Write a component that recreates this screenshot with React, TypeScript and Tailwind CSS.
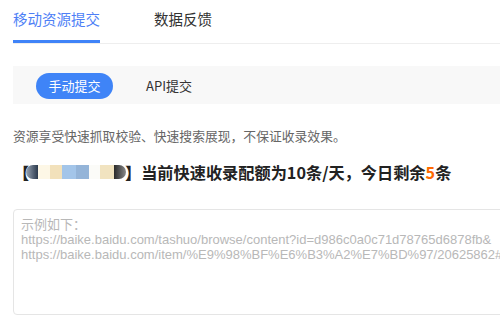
import React from "react";

const font = { fontFamily: '"Noto Sans CJK SC", "Noto Sans", sans-serif' };
const latin = { fontFamily: '"Liberation Sans", "Noto Sans CJK SC", sans-serif' };

export default function App() {
  return (
    <div className="w-[500px] h-[321px] overflow-hidden bg-white" style={font}>
      <div className="ml-[13px] flex border-b border-[#eeeeee] h-[44px]">
        <div className="h-[43px] border-b-[3px] border-[#3f83f8] pt-[9px] text-[14.5px] leading-[20px] text-[#4e7ff6]">
          移动资源提交
        </div>
        <div className="ml-[54px] pt-[9px] text-[14.5px] leading-[20px] text-[#333333]">数据反馈</div>
      </div>

      <div className="ml-[13px] mt-[22px] h-[38px] bg-[#f8f8f8] pl-[23px] pt-[7px] flex items-start">
        <div className="h-[26px] w-[77px] rounded-full bg-[#3f84f7] text-white text-[13px] leading-[26px] text-center">
          手动提交
        </div>
        <div className="ml-[33px] text-[13px] leading-[26px] text-[#333333]">API提交</div>
      </div>

      <div className="ml-[13px] mt-[23px] text-[12.8px] leading-[18px] text-[#666666] whitespace-nowrap">
        资源享受快速抓取校验、快速搜索展现，不保证收录效果。
      </div>

      <div className="ml-[13px] mt-[15px] flex items-center text-[16.2px] leading-[24px] font-bold text-[#222222] whitespace-nowrap">
        <span className="w-[12px]">【</span>
        <div className="flex h-[14px] ml-[1px]">
          <div className="w-[12px] rounded-l-full bg-gradient-to-r from-[#9aa5b3] to-[#2c3a4d]" />
          <div className="w-[12px] bg-[#fdf7e6]" />
          <div className="w-[12px] bg-[#f2e1bb]" />
          <div className="w-[14px] bg-[#a3c5e9]" />
          <div className="w-[13px] bg-[#94b4d8]" />
          <div className="w-[11px] bg-[#fbfbf8]" />
          <div className="w-[14px] bg-[#f1e3c0]" />
          <div className="w-[12px] rounded-r-full bg-gradient-to-r from-[#2a2a2a] to-[#8a8a8a]" />
        </div>
        <span className="-ml-[1px]">】当前快速收录配额为10条/天，今日剩余<span className="text-[#ff6a00]">5</span>条</span>
      </div>

      <div className="ml-[13px] mt-[25px] w-[495px] h-[106px] border border-[#e5e5e5] rounded-[4px] pl-[7px] pt-[6px] text-[13px] leading-[15.5px] text-[#b8b8b8] whitespace-nowrap overflow-hidden">
        <div>示例如下：</div>
        <div style={latin}>https://baike.baidu.com/tashuo/browse/content?id=d986c0a0c71d78765d6878fb&amp;</div>
        <div style={latin}>https://baike.baidu.com/item/%E9%98%BF%E6%B3%A2%E7%BD%97/20625862#</div>
      </div>
    </div>
  );
}
